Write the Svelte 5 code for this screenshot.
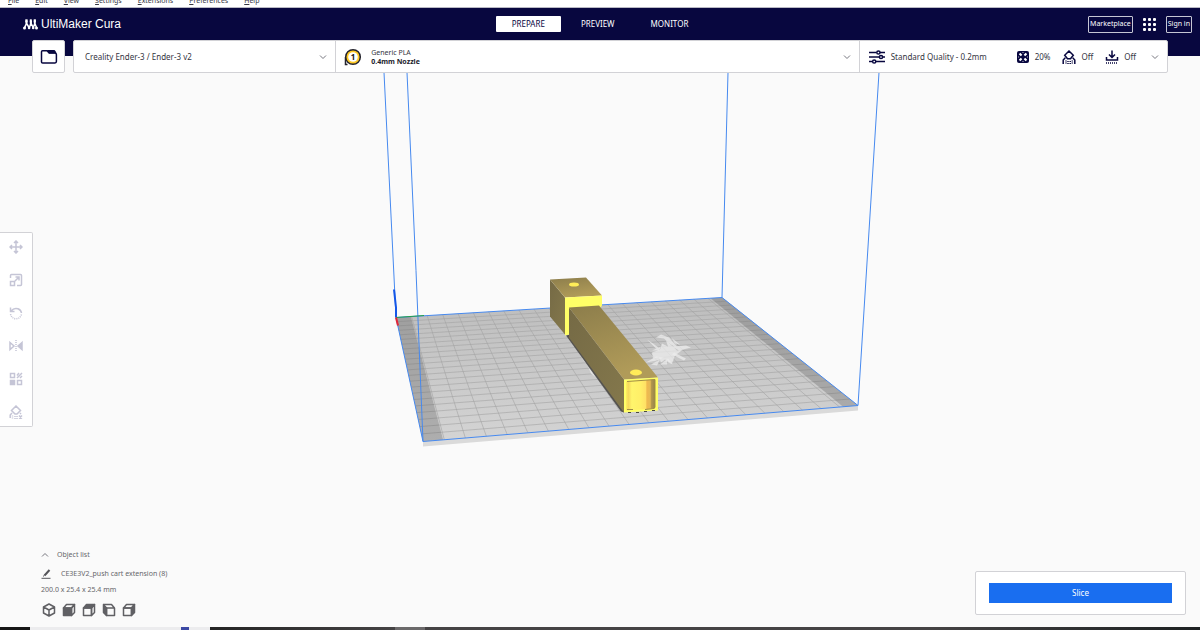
<script lang="ts">
	type Point = [number, number];

	const menus = ['File', 'Edit', 'View', 'Settings', 'Extensions', 'Preferences', 'Help'];
	const stages = ['PREPARE', 'PREVIEW', 'MONITOR'];
	const tools = ['Move', 'Scale', 'Rotate', 'Mirror', 'Per Model Settings', 'Support Blocker'];
	const views = ['3D View', 'Front View', 'Top View', 'Left View', 'Right View'];

	let activeStage = $state('PREPARE');
	let listOpen = $state(true);

	// build plate corners: back left, back right, front right, front left
	const plate: Point[] = [[396, 317], [722, 297], [858, 405], [423, 441]];
	const cells = 22;

	// maps plate coordinates (0..1) to the screen
	function project(u: number, v: number): Point {
		const [[x0, y0], [x1, y1], [x2, y2], [x3, y3]] = plate;
		const dx1 = x1 - x2;
		const dx2 = x3 - x2;
		const dx3 = x0 - x1 + x2 - x3;
		const dy1 = y1 - y2;
		const dy2 = y3 - y2;
		const dy3 = y0 - y1 + y2 - y3;
		const det = dx1 * dy2 - dx2 * dy1;
		const g = (dx3 * dy2 - dx2 * dy3) / det;
		const h = (dx1 * dy3 - dx3 * dy1) / det;
		const w = g * u + h * v + 1;
		return [
			((x1 - x0 + g * x1) * u + (x3 - x0 + h * x3) * v + x0) / w,
			((y1 - y0 + g * y1) * u + (y3 - y0 + h * y3) * v + y0) / w
		];
	}

	function line(a: Point, b: Point): string {
		return `M${a[0].toFixed(1)} ${a[1].toFixed(1)}L${b[0].toFixed(1)} ${b[1].toFixed(1)}`;
	}

	function quad(u0: number, u1: number): string {
		return [project(u0, 0), project(u1, 0), project(u1, 1), project(u0, 1)]
			.map(p => p.map(n => n.toFixed(1)).join(','))
			.join(' ');
	}

	const gridPath = Array.from({ length: cells - 1 }, (_, i) => (i + 1) / cells)
		.map(t => line(project(t, 0), project(t, 1)) + line(project(0, t), project(1, t)))
		.join('');
</script>

{#snippet chevron()}
	<svg class="chevron" viewBox="0 0 8 8" aria-hidden="true"><path d="M1 2.500 4 5.500 7 2.500" /></svg>
{/snippet}

<div class="window">
	<nav class="menubar" aria-label="Application menu">
		{#each menus as menu}
			<button><u>{menu[0]}</u>{menu.slice(1)}</button>
		{/each}
	</nav>

	<header>
		<h1>
			<svg class="logo" viewBox="0 0 15 11" aria-hidden="true">
				<path d="M3.2 1.4v3.6L1.6 8.6M3.8 1.4v3.3L6 8.5M7.6 1.4v3.6L6.4 8.5M8.2 1.4v3.3l2 3.8M11.6 1.4v3.6L10.3 8.5M12 1.4v3.3l1.5 3.9" />
				<circle cx="1.5" cy="8.9" r="1.5" /><circle cx="6.1" cy="9" r="1.3" />
				<circle cx="10.2" cy="9" r="1.3" /><circle cx="13.5" cy="8.9" r="1.5" />
				<rect x="2.3" y="0.3" width="2.3" height="3" /><rect x="6.8" y="0.3" width="2" height="3" /><rect x="10.7" y="0.3" width="2.2" height="3" />
			</svg>
			UltiMaker Cura
		</h1>
		<nav class="stages" aria-label="Stages">
			{#each stages as stage}
				<button class:active={activeStage === stage} onclick={() => (activeStage = stage)}>{stage}</button>
			{/each}
		</nav>
		<div class="account">
			<button class="outlined">Marketplace</button>
			<button class="apps" aria-label="Applications">
				<svg viewBox="0 0 13 13" aria-hidden="true">
					{#each [0, 5, 10] as y}
						{#each [0, 5, 10] as x}
							<rect {x} {y} width="3" height="3" rx="1" />
						{/each}
					{/each}
				</svg>
			</button>
			<button class="outlined">Sign in</button>
		</div>
	</header>

	<div class="configbar">
		<button class="open" aria-label="Open file">
			<svg viewBox="0 0 18 16" aria-hidden="true">
				<path class="stroke" d="M1.5 13V2.8q0-1 1-1H7L9.2 4h5.6q1.6 0 1.6 1.6v7q0 1.4-1.4 1.4H2.7q-1.2 0-1.2-1z" />
				<path d="M7 1h7.5q1.5.5 1.8 3.500H9z" />
			</svg>
		</button>
		<div class="config">
			<div class="printer">
				<select aria-label="Printer">
					<option>Creality Ender-3 / Ender-3 v2</option>
				</select>
				{@render chevron()}
			</div>
			<button class="material">
				<svg class="extruder" viewBox="0 0 18 18" aria-hidden="true">
					<path d="M1.500 9v7.500h2" />
					<circle class="rim" cx="9" cy="9" r="7.3" />
					<circle class="core" cx="9" cy="9" r="4.8" />
					<text x="9" y="12">1</text>
				</svg>
				<span class="names">
					<span>Generic PLA</span>
					<strong>0.4mm Nozzle</strong>
				</span>
				{@render chevron()}
			</button>
			<button class="profile">
				<svg class="sliders" viewBox="0 0 16 14" aria-hidden="true">
					<path d="M0 2.5h7.500M11 2.5h5M0 7h10M14 7h2M0 11.5h3.500M7 11.5h9" />
					<circle cx="9.4" cy="2.5" r="1.6" /><circle cx="12" cy="7" r="1.6" /><circle cx="5.2" cy="11.5" r="1.6" />
				</svg>
				<span class="quality">Standard Quality - 0.2mm</span>
				<span class="setting">
					<svg viewBox="0 0 14 14" aria-hidden="true">
						<rect class="fill" x="1" y="1" width="12" height="12" rx="2" />
						<path class="holes" d="M4.300 2.800 6.300 4.800 4.800 6.300 2.800 4.300zM9.700 2.800 11.200 4.300 9.200 6.300 7.700 4.800zM4.800 7.700 6.300 9.200 4.300 11.200 2.800 9.700zM9.200 7.700 11.200 9.700 9.700 11.200 7.700 9.200z" />
						<path class="holes" d="M6.200 2.300h1.600L7 3.300zM6.200 11.700h1.600L7 10.700zM2.300 6.200v1.600l1-.8zM11.700 6.200v1.600l-1-.8z" />
					</svg>
					20%
				</span>
				<span class="setting">
					<svg viewBox="0 0 14 14" aria-hidden="true">
						<path d="M7 1l4.300 4.300L8.500 8.800h-3L2.700 5.300zM3.300 7.800 1.200 10V14M10.700 7.800l2.100 2.200V14" />
						<path class="dots" d="M4 10.500V14M6 11v3M8.200 11v3M10.300 10.500V14" />
					</svg>
					Off
				</span>
				<span class="setting">
					<svg viewBox="0 0 14 14" aria-hidden="true">
						<path d="M7 0.500V7M4 4.500l3 3 3-3M1.500 7v3h11V7" />
						<path class="dots" d="M1 13h12" />
					</svg>
					Off
				</span>
				{@render chevron()}
			</button>
		</div>
	</div>

	<main>
		<svg class="scene" viewBox="0 72 1200 555" preserveAspectRatio="xMidYMid slice" role="img" aria-label="Build plate">
			<defs>
				<linearGradient id="surface" x1="0" y1="0" x2="0" y2="1">
					<stop offset="0" stop-color="#bdbdbd" /><stop offset="1" stop-color="#d4d4d4" />
				</linearGradient>
				<linearGradient id="top" x1="0" y1="0" x2="0.4" y2="1">
					<stop offset="0" stop-color="#8c7d4b" /><stop offset="1" stop-color="#b09b59" />
				</linearGradient>
				<linearGradient id="side" x1="0" y1="0" x2="1" y2="1">
					<stop offset="0" stop-color="#756a45" /><stop offset="1" stop-color="#84784c" />
				</linearGradient>
				<linearGradient id="bore">
					<stop offset="0" stop-color="#fff05f" /><stop offset="0.08" stop-color="#f5d85c" />
					<stop offset="0.2" stop-color="#fff56c" /><stop offset="0.5" stop-color="#ffef68" />
					<stop offset="0.68" stop-color="#ffe165" /><stop offset="0.72" stop-color="#efb94f" />
					<stop offset="0.84" stop-color="#e4ba55" /><stop offset="0.86" stop-color="#b79a4c" />
					<stop offset="1" stop-color="#96834b" />
				</linearGradient>
			</defs>

			<polygon fill="#dadada" points="423,441 858,405 858,410 423,446" />
			<polygon fill="url(#surface)" points={quad(0, 1)} />
			<path class="grid" d={gridPath} />
			<polygon class="margin" points={quad(0, 0.043)} />
			<polygon class="margin" points={quad(0.963, 1)} />

			<g class="glare">
				<path d="M652 352l8-3 2-6 6 3-2-6 8 7 3 3 6-1-8 6-3 8-7-4-4 3-2-5-6 1z" />
				<path d="M656 337l5-3 8 3 6 7 8 6-6-2-9-6-4-4zM647 339l6 4 8 6-5-1zM672 346l14-1 5 2-12 3zM674 352l12 6-2 2-12-6zM646 362l10-6 8 1-7 3zM651 364l9-5-3 6zM660 364l8-6-1 6zM671 337l9 7-5-1zM668 358l5 6-5-2zM652 350l9-4-2 4z" />
				<path d="M580 350l8 13-3-1-6-9zM588 366l8 11-5-4z" />
			</g>

			<path class="volume" d="M384 72 396 317M407 72 416 270 423 441M728 72 722 297M879 72 858 405" />
			<path class="volume" d="M396 317 722 297 858 405 423 441z" />
			<path d="M396 317V307L394 289" stroke="#1457e8" stroke-width="2" fill="none" />
			<path d="M396 317 424 315" stroke="#24a04a" stroke-width="1" />
			<path d="M396 317 398 325" stroke="#e0273a" stroke-width="2" />

			<polygon fill="#55534f" points="566,335 571,334 624,409 624,412 621,411" />
			<polygon fill="url(#side)" points="550,279 565,297 565,334 550,316" />
			<polygon fill="url(#top)" points="550,279 586,277 602,295 565,297" />
			<polygon fill="#ffff67" points="565,297 602,295 602,305 599,309 570,309 569,334 565,335" />
			<polygon fill="url(#side)" points="569,307 624,379 624,412 569,337" />
			<polygon fill="url(#top)" points="569,307 599,305 658,377 624,379" />
			<polygon fill="#ffff67" points="624,379 658,377 658,410 624,412" />
			<polygon fill="url(#bore)" points="626,381 655,379 655,408 626,410" />
			<path d="M627 381 655 379V407M627 409h6M645 409l9-1" stroke="#a08c45" fill="none" />
			<path d="M628 412h3M636 412h3M644 411h3M652 410h3" stroke="#4a4a42" />
			<ellipse fill="#ffec58" cx="574" cy="284" rx="5" ry="2" />
			<ellipse fill="#ffec58" cx="636" cy="372" rx="6" ry="3" />
		</svg>

		<div class="workspace">
			<div class="toolbar" role="toolbar" aria-label="Tools">
				{#each tools as tool, i}
					<button aria-label={tool} disabled>
						<svg viewBox="0 0 14 14" aria-hidden="true">
							{#if i === 0}
								<path d="M7 1.500v11M1.500 7h11M5 3l2-2 2 2M5 11l2 2 2-2M3 5 1 7l2 2M11 5l2 2-2 2" />
							{:else if i === 1}
								<path d="M1.500 5V2.500q0-1 1-1h9q1 0 1 1v9q0 1-1 1H8M1.500 8.500h4v4h-4zM6 8l4-4M6.500 4H10v3.500" />
							{:else if i === 2}
								<path d="M1.500 1.500v4h4M2 5q3-3.500 7-2.200 3 1.200 3.500 4.200" />
								<path class="dots" d="M12.500 8.500Q11 12.700 7 12.700 2.500 12.500 1.500 8" />
							{:else if i === 3}
								<path d="M1 3.500 5 7l-4 3.500z" /><path class="fill" d="M13 3.500 9 7l4 3.500z" />
								<path class="dots" d="M7 1v12" />
							{:else if i === 4}
								<path d="M1.500 1.500h4v4h-4zM8.500 8.500h4v4h-4zM8 3.500 10 1M8 6l5-5M11 6l2-2" />
								<path class="fill" d="M1.500 8.500h4v4h-4z" />
							{:else}
								<path d="M7 1l4.500 4.500L8 9H6L2.500 5.500zM3 8 1.200 10V13M11 8l1 1M10 10.500l3 3M13 10.500l-3 3" />
								<path class="dots" d="M3.500 10.500V14M6 11v3M8 11v3" />
							{/if}
						</svg>
					</button>
				{/each}
			</div>
		</div>

		<div class="bottom">
			<section class="objects">
				<button class="toggle" aria-expanded={listOpen} onclick={() => (listOpen = !listOpen)}>
					<svg class="chevron" viewBox="0 0 8 8" aria-hidden="true"><path d="M1 5.500 4 2.500 7 5.500" /></svg>
					Object list
				</button>
				<button class="jobname">
					<svg viewBox="0 0 10 10" aria-hidden="true">
						<path d="M0.500 9.300h9" /><path class="pen" d="M8.500 1 3.500 6.500" /><path d="M3.600 6 2 7.500" />
					</svg>
					CE3E3V2_push cart extension (8)
				</button>
				<p>200.0 x 25.4 x 25.4 mm</p>
				<div class="views">
					{#each views as view, i}
						<button aria-label={view}>
							<svg viewBox="0 0 14 14" aria-hidden="true">
								{#if i === 0}
									<path d="M7 1 12.500 4v6L7 13 1.500 10V4zM1.500 4 7 7l5.500-3M7 7v6" />
								{:else if i === 3}
									<path d="M4.500 5h8v7.500h-8zM1.500 1.500h8l3 3.500" />
									<path class="fill" d="M1.500 1.500 4.500 5v7.500l-3-3z" />
								{:else}
									<path class:fill={i === 1} d="M1.500 5h8v7.500h-8z" />
									<path class:fill={i === 2} d="M1.500 5 4.500 1.500h8L9.500 5z" />
									<path class:fill={i === 4} d="M9.500 5l3-3.500v8l-3 3z" />
								{/if}
							</svg>
						</button>
					{/each}
				</div>
			</section>
			<section class="action">
				<button>Slice</button>
			</section>
		</div>
	</main>

	<footer>
		<span class="start"></span>
		<span class="task"><i></i></span>
		<span class="rest"></span>
		<span class="current"></span>
		<span class="tray"></span>
	</footer>
</div>

<style>
	:global(body) {
		margin: 0;
	}

	.window {
		display: flex;
		flex-direction: column;
		min-height: 100vh;
		background: #fafafa;
		color: #35353f;
		font-family: 'Noto Sans', sans-serif;
		font-size: 8px;
		line-height: 12px;
	}

	button {
		margin: 0;
		padding: 0;
		border: 0;
		background: none;
		color: inherit;
		font: inherit;
		cursor: pointer;
	}

	svg {
		display: block;
		flex: none;
		fill: none;
	}

	.menubar {
		display: flex;
		align-items: flex-end;
		gap: 16px;
		box-sizing: border-box;
		height: 8px;
		padding: 0 8px 1px;
		overflow: hidden;
		background: #fff;
		border-bottom: 1px solid #b9b9c4;
		font-size: 7px;
		line-height: 10px;
	}

	header {
		display: grid;
		grid-template-columns: 1fr auto 1fr;
		align-items: center;
		padding: 0 8px 16px;
		height: 32px;
		background: #08073f;
		color: #fff;
	}

	h1 {
		display: flex;
		align-items: center;
		gap: 3px;
		margin: 0 0 0 15px;
		font: 12px/16px 'Liberation Sans', sans-serif;
	}

	.logo {
		width: 15px;
		height: 11px;
		fill: #fff;
		stroke: #fff;
	}

	.logo path {
		fill: none;
		stroke-width: 1.5;
	}

	.logo rect,
	.logo circle {
		stroke: none;
	}

	.stages {
		display: flex;
		gap: 4px;
	}

	.stages button {
		height: 16px;
		padding: 0 16px;
		border-radius: 1px;
	}

	.stages .active {
		background: #fff;
		color: #08073f;
	}

	.account {
		display: flex;
		align-items: center;
		justify-content: flex-end;
		gap: 10px;
	}

	.outlined {
		height: 17px;
		padding: 0 1px;
		border: 1px solid #c6c6d4;
		border-radius: 1px;
		font-size: 7px;
	}

	.apps svg {
		width: 13px;
		height: 13px;
		fill: #fff;
	}

	.configbar {
		position: relative;
		z-index: 1;
		display: flex;
		gap: 8px;
		margin-top: -16px;
		padding: 0 32px;
	}

	.open,
	.config {
		box-sizing: border-box;
		height: 33px;
		background: #fff;
		border: 1px solid #d2d2d6;
		border-radius: 2px;
	}

	.open {
		display: grid;
		place-items: center;
		width: 33px;
	}

	.open svg {
		width: 18px;
		height: 16px;
		fill: #08073f;
	}

	.open .stroke {
		fill: none;
		stroke: #08073f;
		stroke-width: 1.5;
	}

	.config {
		display: grid;
		grid-template-columns: 261fr 523fr 308fr;
		flex: 1;
	}

	.printer,
	.material,
	.profile {
		display: flex;
		align-items: center;
		padding: 0 8px 0 11px;
		text-align: left;
	}

	.material,
	.profile {
		border-left: 1px solid #d2d2d6;
	}

	.printer select {
		flex: 1;
		padding: 0;
		border: 0;
		appearance: none;
		background: none;
		color: inherit;
		font: inherit;
	}

	.chevron {
		width: 8px;
		height: 8px;
		stroke: #77777f;
	}

	.material {
		gap: 9px;
		padding-left: 8px;
	}

	.extruder {
		width: 18px;
		height: 18px;
		stroke: #23232d;
		stroke-width: 1.5;
	}

	.extruder .rim {
		fill: #ffc924;
	}

	.extruder .core {
		fill: #fff;
		stroke: none;
	}

	.extruder text {
		fill: #111;
		stroke: none;
		font-size: 8px;
		font-weight: 700;
		text-anchor: middle;
	}

	.names {
		display: flex;
		flex: 1;
		flex-direction: column;
		font-size: 7px;
		line-height: 9px;
	}

	.names strong {
		color: #22222c;
	}

	.profile {
		padding-left: 9px;
	}

	.profile svg:not(.chevron) {
		stroke: #08073f;
		stroke-width: 1.5;
	}

	.sliders {
		width: 16px;
		height: 14px;
	}

	.quality {
		flex: 1;
		padding-left: 6px;
	}

	.setting {
		display: flex;
		align-items: center;
		gap: 5px;
		margin-right: 12px;
	}

	.setting:last-of-type {
		margin-right: 15px;
	}

	.setting svg {
		width: 14px;
		height: 14px;
	}

	.setting .fill {
		fill: #08073f;
		stroke: none;
	}

	.setting .holes {
		fill: #fff;
		stroke: none;
	}

	.dots {
		stroke-dasharray: 1 1;
	}

	main {
		position: relative;
		display: flex;
		flex: 1;
		flex-direction: column;
	}

	.scene {
		position: absolute;
		inset: 0;
		width: 100%;
		height: 100%;
	}

	.grid {
		stroke: #a3a3a3;
		stroke-opacity: 0.6;
	}

	.margin {
		fill: #555;
		fill-opacity: 0.3;
	}

	.glare {
		fill: #ececec;
		fill-opacity: 0.75;
	}

	.volume {
		stroke: #4689ef;
	}

	.workspace,
	.bottom {
		position: relative;
		display: flex;
	}

	.workspace {
		flex: 1;
		align-items: center;
		padding-top: 38px;
	}

	.toolbar {
		display: flex;
		flex-direction: column;
		gap: 5px;
		background: #fff;
		border: 1px solid #d2d2d6;
		border-left: 0;
		border-radius: 0 2px 2px 0;
	}

	.toolbar button {
		display: grid;
		place-items: center;
		width: 32px;
		height: 28px;
	}

	.toolbar svg {
		width: 14px;
		height: 14px;
		stroke: #c5c5d6;
		stroke-width: 1.5;
	}

	.toolbar .fill {
		fill: #c5c5d6;
	}

	.bottom {
		align-items: flex-end;
		justify-content: space-between;
		padding: 0 14px 0 41px;
	}

	.objects {
		display: flex;
		flex-direction: column;
		align-items: flex-start;
		height: 79px;
		color: #66666a;
		font-size: 7px;
	}

	.toggle,
	.jobname {
		display: flex;
		align-items: center;
		height: 14px;
	}

	.toggle {
		gap: 8px;
	}

	.jobname {
		gap: 10px;
		margin-top: 5px;
	}

	.jobname svg {
		width: 10px;
		height: 10px;
		stroke: #55555a;
	}

	.jobname .pen {
		stroke-width: 2;
	}

	p {
		margin: 3px 0 7px;
	}

	.views {
		display: flex;
		gap: 6px;
		padding-left: 1px;
	}

	.views svg {
		width: 14px;
		height: 14px;
		stroke: #606064;
		stroke-linejoin: round;
		stroke-width: 1.5;
	}

	.views .fill {
		fill: #606064;
	}

	.action {
		box-sizing: border-box;
		width: 211px;
		margin-bottom: 12px;
		padding: 11px 13px;
		background: #fff;
		border: 1px solid #d2d2d6;
		border-radius: 2px;
	}

	.action button {
		width: 100%;
		height: 20px;
		background: #196ef0;
		color: #fff;
	}

	footer {
		display: flex;
		height: 3px;
		background: #454344;
	}

	.start {
		width: 30px;
		background: #161616;
	}

	.task {
		display: flex;
		justify-content: flex-end;
		box-sizing: border-box;
		width: 180px;
		padding-right: 21px;
		background: #ececee;
	}

	.task i {
		width: 8px;
		background: #3b49a4;
	}

	.rest {
		width: 185px;
		background: linear-gradient(90deg, #242424, #454344);
	}

	.current {
		width: 30px;
		background: #6b696a;
	}

	.tray {
		flex: 1;
		background: linear-gradient(90deg, #454344 65%, #1d2122);
	}
</style>
